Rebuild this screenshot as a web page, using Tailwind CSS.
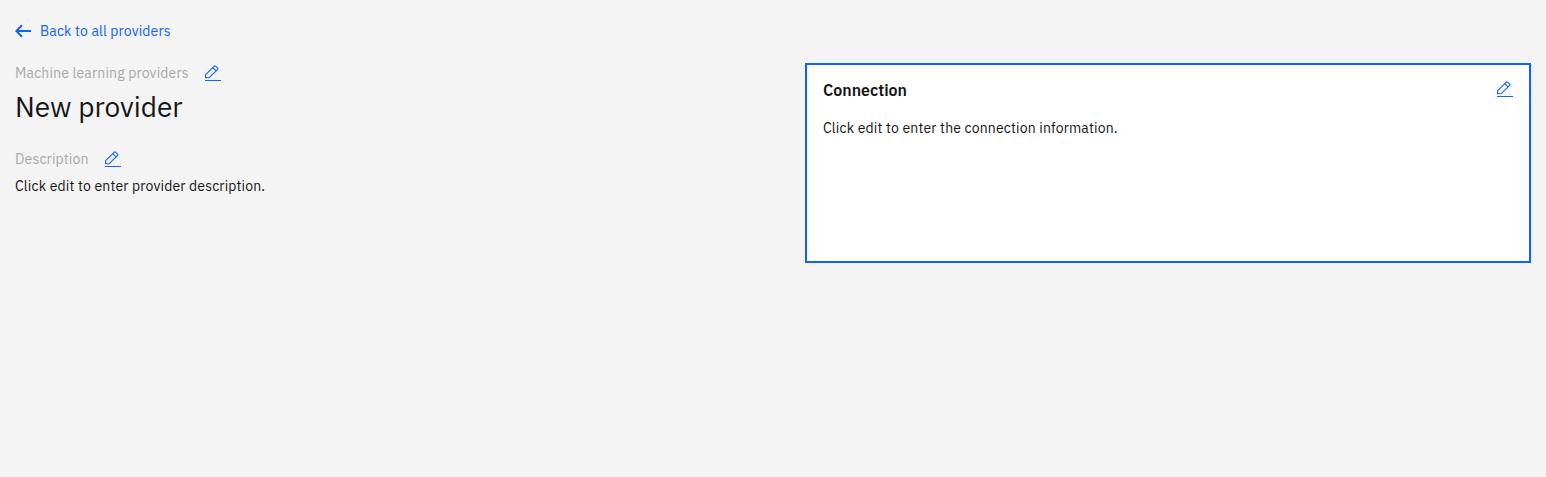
<!DOCTYPE html>
<html lang="en">
<head>
<meta charset="utf-8">
<title>New provider</title>
<script src="https://cdn.jsdelivr.net/npm/@tailwindcss/browser@4"></script>
</head>
<body class="h-screen overflow-hidden bg-[#f4f4f4] px-[15px] pt-[22px] font-['IBM_Plex_Sans',Roboto,sans-serif] text-sm leading-[18px] text-[#161616]">
<svg class="hidden"><symbol id="edit" viewBox="0 0 16 16"><path d="M0 15H16V16H0z"/><path fill="none" stroke="#0f62fe" stroke-width="1.1" stroke-linejoin="round" d="M.6 12.8V9.7L9.3 1.1Q9.9.6 10.5 1.1L12.7 3.2Q13.2 3.7 12.7 4.3L4 12.8ZM7.8 2.6L11.1 5.8"/></symbol></svg>
<a class="flex w-max items-center gap-[9px] text-[#0f62fe]">
  <svg class="h-[18px] w-4" viewBox="0 0 16 18" fill="none" stroke="currentColor" stroke-width="2"><path d="M16 9H1.5M7 3.2L1.3 9L7 14.8"/></svg>
  <span class="tracking-[0.14px]">Back to all providers</span>
</a>
<main class="mt-[23px] flex justify-between">
  <section>
    <div class="flex items-start gap-4 pt-[2px] text-[#a8a8a8]">
      <span class="mt-[-1px] w-[174px] whitespace-nowrap tracking-[0.16px]">Machine learning providers</span>
      <svg class="size-4 fill-[#0f62fe]"><use href="#edit"/></svg>
    </div>
    <h1 class="mt-[7px] text-[28px] font-normal leading-9">New provider</h1>
    <div class="mt-[26px] flex items-start gap-4 text-[#a8a8a8]">
      <span class="mt-[-1px] w-[74px] whitespace-nowrap tracking-[0.16px]">Description</span>
      <svg class="size-4 fill-[#0f62fe]"><use href="#edit"/></svg>
    </div>
    <p class="mt-[9px] tracking-[0.16px]">Click edit to enter provider description.</p>
  </section>
  <section class="h-[200px] w-[726px] border-2 border-[#0f62fe] bg-white p-4">
    <div class="flex items-start justify-between">
      <h2 class="text-base font-semibold leading-[18px]">Connection</h2>
      <svg class="size-4 fill-[#0f62fe]"><use href="#edit"/></svg>
    </div>
    <p class="mt-5 tracking-[0.16px]">Click edit to enter the connection information.</p>
  </section>
</main>
</body>
</html>
